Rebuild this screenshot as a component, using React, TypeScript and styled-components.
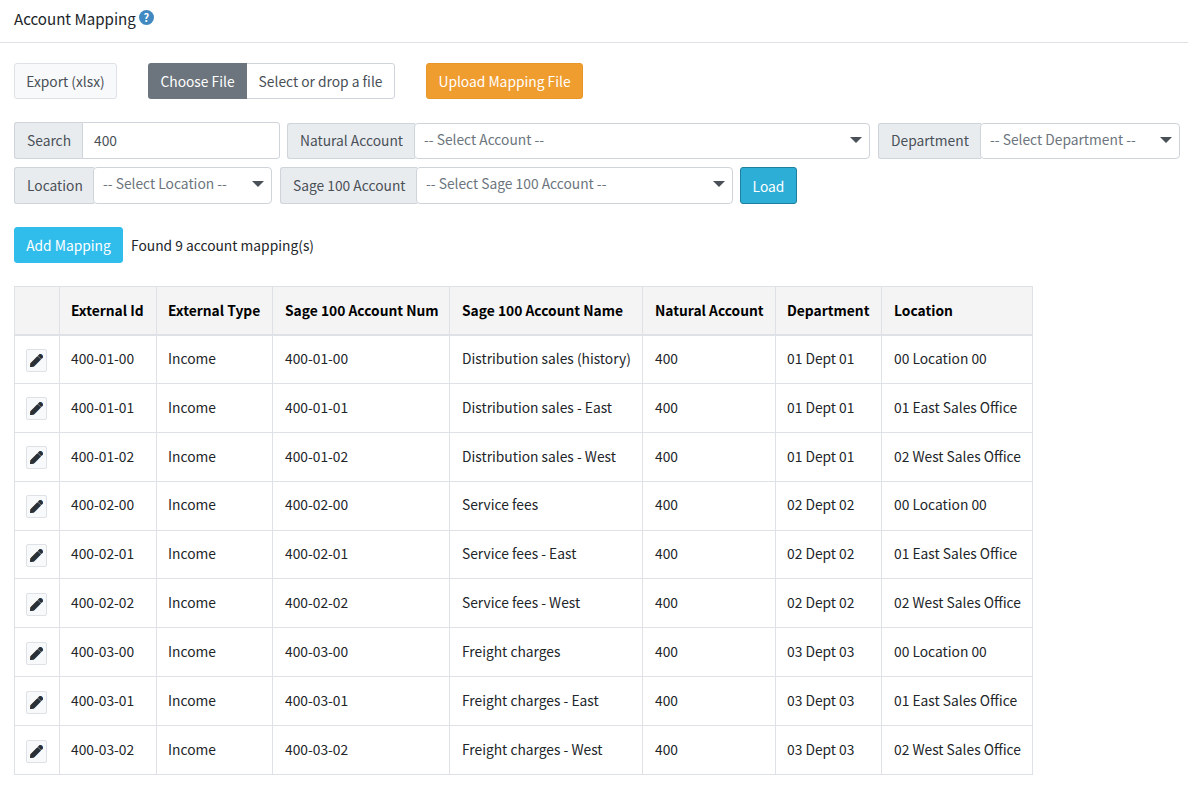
import React from "react";
import styled, { createGlobalStyle } from "styled-components";

const Global = createGlobalStyle`
  html, body { margin: 0; padding: 0; background: #fff; }
  body { font-family: "Noto Sans CJK SC", "Noto Sans", sans-serif; font-size: 13.8px; color: #212529; }
`;

const Page = styled.div`
  width: 1188px;
  height: 790px;
  overflow: hidden;
`;
const Header = styled.header`
  box-sizing: border-box;
  border-bottom: 1px solid #dee2e6;
  padding: 0 14px 6px;
  display: flex;
  align-items: center;
  gap: 3px;
  height: 43px;
  font-size: 15.1px;
  color: #212529;
`;
const Help = styled.span`
  width: 15px;
  height: 15px;
  margin-top: -2px;
  border-radius: 50%;
  background: #4189c0;
  color: #fff;
  font-size: 11px;
  font-weight: 700;
  line-height: 15px;
  text-align: center;
`;
const Body = styled.main`
  padding: 20px 14px 0;
`;
const Toolbar = styled.div`
  display: flex;
  align-items: center;
  height: 36px;
`;
const Button = styled.button<{ $bg: string; $fg: string; $bd: string; $w: number; $h?: number; $ml?: number }>`
  box-sizing: border-box;
  width: ${(p) => p.$w}px;
  height: ${(p) => p.$h ?? 36}px;
  margin-left: ${(p) => p.$ml ?? 0}px;
  padding: 0;
  background: ${(p) => p.$bg};
  color: ${(p) => p.$fg};
  border: 1px solid ${(p) => p.$bd};
  border-radius: 3px;
  font: inherit;
  line-height: 20px;
  white-space: nowrap;
  flex: none;
`;
const FileGroup = styled.div`
  display: flex;
  box-sizing: border-box;
  width: 247px;
  height: 36px;
  margin-left: 31px;
  border-radius: 3px;
  overflow: hidden;
`;
const FileButton = styled.span`
  width: 99px;
  background: #6c757d;
  color: #fff;
  display: flex;
  align-items: center;
  justify-content: center;
`;
const FileName = styled.span`
  flex: 1;
  border: 1px solid #ced4da;
  border-left: 0;
  border-radius: 0 3px 3px 0;
  display: flex;
  align-items: center;
  padding-left: 11.6px;
  color: #495057;
`;
const FilterRow = styled.div<{ $mt: number }>`
  display: flex;
  align-items: flex-start;
  margin-top: ${(p) => p.$mt}px;
`;
const Group = styled.div<{ $w: number; $ml?: number; $mt?: number; $h?: number }>`
  display: flex;
  box-sizing: border-box;
  width: ${(p) => p.$w}px;
  height: ${(p) => p.$h ?? 37}px;
  margin-left: ${(p) => p.$ml ?? 0}px;
  margin-top: ${(p) => p.$mt ?? 0}px;
  flex: none;
`;
const Addon = styled.span<{ $w: number }>`
  box-sizing: border-box;
  width: ${(p) => p.$w}px;
  flex: none;
  background: #e9ecef;
  border: 1px solid #ced4da;
  border-right: 0;
  border-radius: 3px 0 0 3px;
  color: #495057;
  display: flex;
  align-items: center;
  padding: 0 0 2px 12px;
  white-space: nowrap;
`;
const Input = styled.span`
  flex: 1;
  border: 1px solid #ced4da;
  border-radius: 0 3px 3px 0;
  display: flex;
  align-items: center;
  padding: 0 0 2px 11px;
  color: #495057;
`;
const Select = styled.div`
  flex: 1;
  position: relative;
  border: 1px solid #ced4da;
  border-radius: 4px;
  margin-left: -1px;
  background: #fff;
  display: flex;
  align-items: center;
  padding: 0 0 5px 9px;
  color: #6c757d;
  white-space: nowrap;
  min-width: 0;
`;
const Caret = styled.i`
  position: absolute;
  right: 7px;
  top: 13px;
  width: 0;
  height: 0;
  border-left: 6px solid transparent;
  border-right: 6px solid transparent;
  border-top: 6px solid #495057;
`;
const ActionRow = styled.div`
  display: flex;
  align-items: center;
  gap: 8px;
  margin-top: 23px;
`;
const Table = styled.table`
  margin-top: 23px;
  border-collapse: collapse;
  table-layout: fixed;
  width: 1018px;

  th:nth-child(2), th:nth-child(3), th:nth-child(7),
  td:nth-child(2), td:nth-child(3), td:nth-child(7) {
    padding-left: 11px;
  }
`;
const Th = styled.th<{ $w: number }>`
  width: ${(p) => p.$w}px;
  height: 48px;
  box-sizing: border-box;
  padding: 0 12px;
  background: #f4f4f4;
  border: 1px solid #dee2e6;
  border-bottom-width: 2px;
  text-align: left;
  font-weight: 700;
  color: #000;
  white-space: nowrap;
`;
const Td = styled.td`
  height: 48.9px;
  box-sizing: border-box;
  padding: 0 12px 2.4px;
  border: 1px solid #dee2e6;
  color: #212529;
  white-space: nowrap;
`;
const EditCell = styled(Td)`
  padding: 2px 0 0 11px;
`;
const EditButton = styled.button`
  box-sizing: border-box;
  width: 21px;
  height: 23px;
  padding: 0;
  background: #f8f9fa;
  border: 1px solid #dee2e6;
  border-radius: 2px;
  display: flex;
  align-items: center;
  justify-content: center;
`;

const pencilPath =
  "M497.9 142.1l-46.1 46.1c-4.7 4.7-12.3 4.7-17 0l-111-111c-4.7-4.7-4.7-12.3 0-17l46.1-46.1c18.7-18.7 49.1-18.7 67.9 0l60.1 60.1c18.8 18.7 18.8 49.1 0 67.9zM284.2 99.8L21.6 362.4.4 483.9c-2.9 16.4 11.4 30.6 27.8 27.8l121.5-21.3 262.6-262.6c4.7-4.7 4.7-12.3 0-17l-111-111c-4.8-4.7-12.4-4.7-17.1 0z";

const Pencil = () => (
  <svg width="13" height="13" viewBox="0 0 512 512">
    <path d={pencilPath} fill="#c9833c" transform="translate(-24 16)" />
    <path d={pencilPath} fill="#2f74b8" transform="translate(24 -8)" />
    <path d={pencilPath} fill="#2b2f36" />
  </svg>
);

const columns: [string, number][] = [
  ["", 45],
  ["External Id", 97],
  ["External Type", 116],
  ["Sage 100 Account Num", 177],
  ["Sage 100 Account Name", 193],
  ["Natural Account", 133],
  ["Department", 106],
  ["Location", 151],
];

const rows = [
  ["400-01-00", "Distribution sales (history)", "01 Dept 01", "00 Location 00"],
  ["400-01-01", "Distribution sales - East", "01 Dept 01", "01 East Sales Office"],
  ["400-01-02", "Distribution sales - West", "01 Dept 01", "02 West Sales Office"],
  ["400-02-00", "Service fees", "02 Dept 02", "00 Location 00"],
  ["400-02-01", "Service fees - East", "02 Dept 02", "01 East Sales Office"],
  ["400-02-02", "Service fees - West", "02 Dept 02", "02 West Sales Office"],
  ["400-03-00", "Freight charges", "03 Dept 03", "00 Location 00"],
  ["400-03-01", "Freight charges - East", "03 Dept 03", "01 East Sales Office"],
  ["400-03-02", "Freight charges - West", "03 Dept 03", "02 West Sales Office"],
];

export default function App() {
  return (
    <Page>
      <Global />
      <Header>
        Account Mapping <Help>?</Help>
      </Header>
      <Body>
        <Toolbar>
          <Button $bg="#f8f9fa" $fg="#495057" $bd="#dee2e6" $w={103}>Export (xlsx)</Button>
          <FileGroup>
            <FileButton>Choose File</FileButton>
            <FileName>Select or drop a file</FileName>
          </FileGroup>
          <Button $bg="#f09d30" $fg="#fff" $bd="#e8952a" $w={157} $ml={31}>Upload Mapping File</Button>
        </Toolbar>
        <FilterRow $mt={23}>
          <Group $w={266}>
            <Addon $w={68}>Search</Addon>
            <Input>400</Input>
          </Group>
          <Group $w={583} $ml={7} $mt={1} $h={36}>
            <Addon $w={128}>Natural Account</Addon>
            <Select>-- Select Account --<Caret /></Select>
          </Group>
          <Group $w={302} $ml={8} $mt={1} $h={36}>
            <Addon $w={103}>Department</Addon>
            <Select>-- Select Department --<Caret /></Select>
          </Group>
        </FilterRow>
        <FilterRow $mt={8}>
          <Group $w={258}>
            <Addon $w={80}>Location</Addon>
            <Select>-- Select Location --<Caret /></Select>
          </Group>
          <Group $w={453} $ml={8}>
            <Addon $w={137}>Sage 100 Account</Addon>
            <Select>-- Select Sage 100 Account --<Caret /></Select>
          </Group>
          <Button $bg="#2daed6" $fg="#fff" $bd="#1f7f9e" $w={57} $h={37} $ml={7}>Load</Button>
        </FilterRow>
        <ActionRow>
          <Button $bg="#31bdec" $fg="#fff" $bd="#31bdec" $w={109}>Add Mapping</Button>
          Found 9 account mapping(s)
        </ActionRow>
        <Table>
          <thead>
            <tr>
              {columns.map(([label, w]) => (
                <Th key={label} $w={w}>{label}</Th>
              ))}
            </tr>
          </thead>
          <tbody>
            {rows.map(([id, name, dept, loc]) => (
              <tr key={id}>
                <EditCell><EditButton aria-label="Edit"><Pencil /></EditButton></EditCell>
                <Td>{id}</Td>
                <Td>Income</Td>
                <Td>{id}</Td>
                <Td>{name}</Td>
                <Td>400</Td>
                <Td>{dept}</Td>
                <Td>{loc}</Td>
              </tr>
            ))}
          </tbody>
        </Table>
      </Body>
    </Page>
  );
}
